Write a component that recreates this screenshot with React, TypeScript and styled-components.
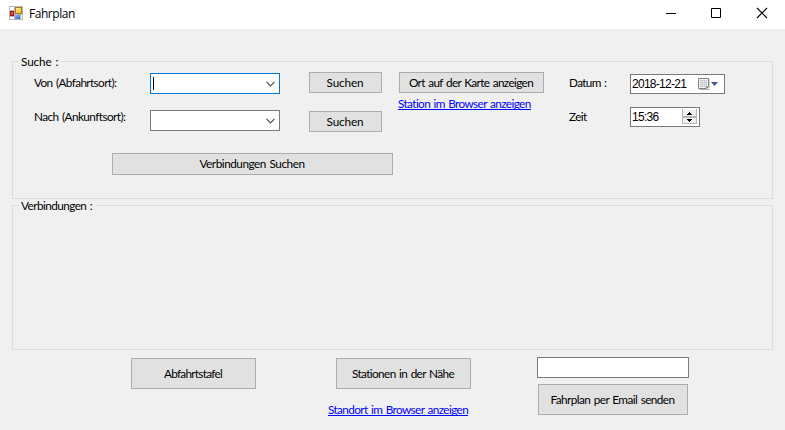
import React from "react";
import styled, { createGlobalStyle } from "styled-components";

const GlobalStyle = createGlobalStyle`
  * { box-sizing: border-box; }
  body { margin: 0; background: #f0f0f0; }
`;

const Window = styled.div`
  width: 785px;
  height: 430px;
  display: flex;
  flex-direction: column;
  overflow: hidden;
  background: #f0f0f0;
  color: #000;
  font: 11.75px/14px Lato, "Liberation Sans", sans-serif;
  word-spacing: 1px;
  white-space: nowrap;
`;

const TitleBar = styled.header`
  flex: none;
  height: 29px;
  display: flex;
  align-items: flex-start;
  padding: 6px 17px 0 9px;
  background: #fff;
`;

const Title = styled.h1`
  flex: 1;
  margin: 0 0 0 6px;
  font: 400 12px/16px "Open Sans", sans-serif;
  letter-spacing: -0.45px;
`;

const WindowControls = styled.div`
  display: flex;
  gap: 34px;
  padding-top: 1px;
`;

const Content = styled.main`
  display: flex;
  flex-direction: column;
  padding: 32px 12px 0;
`;

const Group = styled.section<{ $height: number }>`
  height: ${(p) => p.$height}px;
  margin-bottom: 6px;
  border: 1px solid #dcdcdc;
`;

const Legend = styled.h2<{ $width: number; $spacing: number }>`
  width: ${(p) => p.$width}px;
  height: 14px;
  margin: -7px 0 0 6px;
  padding-left: 2px;
  background: #f0f0f0;
  font: inherit;
  letter-spacing: ${(p) => p.$spacing}px;
`;

const SearchGrid = styled.div`
  display: grid;
  grid-template-columns: 116px 159px 89px 171px 61px 100px;
  grid-template-rows: 38px 43px 22px;
  align-items: start;
  padding: 3px 0 0 21px;
`;

const Label = styled.label<{ $spacing: number; $top: number }>`
  margin-top: ${(p) => p.$top}px;
  letter-spacing: ${(p) => p.$spacing}px;
`;

const Combo = styled.div<{ $focused?: boolean }>`
  width: 130px;
  height: 21px;
  margin-top: ${(p) => (p.$focused ? 1 : 0)}px;
  display: flex;
  align-items: center;
  justify-content: space-between;
  padding: 0 4px 0 2px;
  border: 1px solid ${(p) => (p.$focused ? "#0078d7" : "#7a7a7a")};
  background: #fff;
`;

const Caret = styled.span<{ $visible?: boolean }>`
  width: 1px;
  height: 13px;
  margin-bottom: 1px;
  background: ${(p) => (p.$visible ? "#000" : "transparent")};
`;

const Button = styled.button<{ $width: number; $height: number; $spacing: number; $top?: number }>`
  width: ${(p) => p.$width}px;
  height: ${(p) => p.$height}px;
  margin: ${(p) => p.$top ?? 0}px 0 0;
  padding: 0 1px 0 0;
  border: 1px solid #adadad;
  background: #e1e1e1;
  color: #000;
  font: inherit;
  word-spacing: inherit;
  letter-spacing: ${(p) => p.$spacing}px;
`;

const IndentedButton = styled(Button)`
  margin-left: 1px;
`;

const WideCell = styled.div`
  grid-column: 1 / -1;
  padding-left: 78px;
`;

const MapActions = styled.div`
  display: flex;
  flex-direction: column;
  align-items: flex-start;
  gap: 4px;
`;

const Link = styled.a<{ $spacing: number }>`
  height: 13px;
  border-bottom: 1px solid #0000ff;
  color: #0000ff;
  cursor: pointer;
  letter-spacing: ${(p) => p.$spacing}px;
`;

const Field = styled.div<{ $width: number; $top: number }>`
  width: ${(p) => p.$width}px;
  height: 20px;
  margin-top: ${(p) => p.$top}px;
  display: flex;
  align-items: center;
  justify-content: space-between;
  padding: 0 0 0 1px;
  border: 1px solid #7a7a7a;
  background: #fff;
  font: 12px/18px "Liberation Sans", sans-serif;
  letter-spacing: -0.72px;
`;

const Footer = styled.footer`
  display: flex;
  align-items: flex-start;
  padding-left: 119px;
`;

const DepartureActions = styled.div`
  padding-top: 2px;
`;

const NearbyActions = styled.div`
  width: 209px;
  margin-left: 72px;
  display: flex;
  flex-direction: column;
  align-items: flex-start;
  gap: 14px;
`;

const NearbyButtonRow = styled.div`
  padding: 2px 0 0 8px;
  display: flex;
`;

const MailActions = styled.div`
  display: flex;
  flex-direction: column;
  gap: 6px;
  padding-top: 1px;
`;

const MailInput = styled.input`
  width: 152px;
  height: 21px;
  padding: 0 3px;
  border: 1px solid #7a7a7a;
  background: #fff;
  font: inherit;
`;

const AppIcon = () => (
  <svg width="14" height="14" viewBox="0 0 14 14" shapeRendering="crispEdges">
    <defs>
      <linearGradient id="gold" x2="1" y2="1">
        <stop stopColor="#ffec91" />
        <stop offset="1" stopColor="#f5b817" />
      </linearGradient>
      <linearGradient id="blue" x2="1" y2="1">
        <stop stopColor="#86b3f5" />
        <stop offset="1" stopColor="#3667c8" />
      </linearGradient>
    </defs>
    <path fill="#b9b9b9" d="M0 0h14v14H0z" />
    <path fill="#fff" d="M1 1h4v3H1zM1 11h4v2H1zM12 9h1v4h-1z" />
    <path fill="#9f1710" d="M1 5h4v5H1z" />
    <path fill="#df5549" d="M2 6h2v3H2z" />
    <path fill="#a47b16" d="M6 1h7v7H6z" />
    <path fill="url(#gold)" d="M7 2h5v5H7z" />
    <path fill="url(#blue)" d="M6 9h5v4H6z" />
  </svg>
);

const Chevron = () => (
  <svg width="9" height="6" viewBox="0 0 9 6">
    <path d="M.5 .8 4.5 4.8 8.5 .8" fill="none" stroke="#505050" strokeWidth="1.2" />
  </svg>
);

const CalendarIcon = () => (
  <svg width="26" height="18" viewBox="0 0 26 18">
    <path d="M1.500 14.500h9.500V4" fill="none" stroke="#b0aaa6" />
    <path d="M.5 3.500h10v8l-2 2h-8z" fill="#f5f5f5" stroke="#85807e" />
    <path d="M2 5h7v7H2z" fill="#b9bdc6" />
    <path d="M3.500 5v7M5.500 5v7M7.500 5v7M2 6.500h7M2 8.500h7M2 10.500h7" stroke="#eef0f3" strokeWidth=".6" />
    <path d="M8 13.500v-2h2.500z" fill="#77716e" />
    <path d="M13 7h7l-3.500 4z" fill="#47598a" />
  </svg>
);

const Spinner = () => (
  <svg width="17" height="18" viewBox="0 0 17 18" shapeRendering="crispEdges">
    <path d="M1 2h14v6H1zM1 10h14v6H1z" fill="#f0f0f0" />
    <path d="M0 1h1v15H0zM14 1h1v15h-1zM0 8h15v2H0zM0 15h15v1H0z" fill="#b8b8b8" />
    <path d="M7 4h1v1h1v1h1v1H5V6h1V5h1zM5 11h5v1H9v1H8v1H7v-1H6v-1H5z" fill="#000" />
  </svg>
);

const MinimizeIcon = () => (
  <svg width="12" height="12" viewBox="0 0 12 12" shapeRendering="crispEdges">
    <path d="M2 6h10v1H2z" />
  </svg>
);

const MaximizeIcon = () => (
  <svg width="12" height="12" viewBox="0 0 12 12">
    <path d="M1.500 1.500h9v9h-9z" fill="none" stroke="#000" />
  </svg>
);

const CloseIcon = () => (
  <svg width="12" height="12" viewBox="0 0 12 12">
    <path d="M1 1l10 10M11 1L1 11" fill="none" stroke="#000" strokeWidth="1.1" />
  </svg>
);

export default function App() {
  return (
    <Window>
      <GlobalStyle />
      <TitleBar>
        <AppIcon />
        <Title>Fahrplan</Title>
        <WindowControls>
          <MinimizeIcon />
          <MaximizeIcon />
          <CloseIcon />
        </WindowControls>
      </TitleBar>
      <Content>
        <Group $height={138}>
          <Legend $width={42} $spacing={-0.13}>Suche :</Legend>
          <SearchGrid>
            <Label $top={4} $spacing={-0.6}>Von (Abfahrtsort):</Label>
            <Combo $focused>
              <Caret $visible />
              <Chevron />
            </Combo>
            <Button $width={73} $height={21} $spacing={-0.15}>Suchen</Button>
            <MapActions>
              <IndentedButton $width={145} $height={21} $spacing={-0.63}>Ort auf der Karte anzeigen</IndentedButton>
              <Link $spacing={-0.6}>Station im Browser anzeigen</Link>
            </MapActions>
            <Label $top={4} $spacing={-0.65}>Datum :</Label>
            <Field $width={95} $top={2}>
              2018-12-21
              <CalendarIcon />
            </Field>

            <Label $top={0} $spacing={-0.56}>Nach (Ankunftsort):</Label>
            <Combo>
              <Caret />
              <Chevron />
            </Combo>
            <Button $width={73} $height={21} $top={1} $spacing={-0.15}>Suchen</Button>
            <span />
            <Label $top={0} $spacing={-0.6}>Zeit</Label>
            <Field $width={70} $top={-3}>
              15:36
              <Spinner />
            </Field>

            <WideCell>
              <Button $width={281} $height={22} $spacing={-0.46}>Verbindungen Suchen</Button>
            </WideCell>
          </SearchGrid>
        </Group>
        <Group $height={145}>
          <Legend $width={77} $spacing={-0.55}>Verbindungen :</Legend>
        </Group>
        <Footer>
          <DepartureActions>
            <Button $width={125} $height={31} $spacing={-0.72}>Abfahrtstafel</Button>
          </DepartureActions>
          <NearbyActions>
            <NearbyButtonRow>
              <Button $width={135} $height={31} $spacing={-0.6}>Stationen in der Nähe</Button>
            </NearbyButtonRow>
            <Link $spacing={-0.6}>Standort im Browser anzeigen</Link>
          </NearbyActions>
          <MailActions>
            <MailInput aria-label="Email" />
            <IndentedButton $width={150} $height={31} $spacing={-0.56}>Fahrplan per Email senden</IndentedButton>
          </MailActions>
        </Footer>
      </Content>
    </Window>
  );
}
